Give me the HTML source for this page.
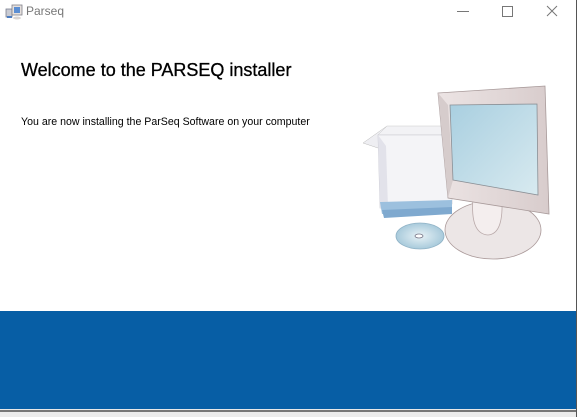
<!DOCTYPE html>
<html><head><meta charset="utf-8"><style>
html,body{margin:0;padding:0;}
body{width:577px;height:417px;position:relative;background:#fff;overflow:hidden;font-family:"Liberation Sans",sans-serif;}
.t{position:absolute;}
</style></head><body>
<div class="t" style="left:576px;top:0;width:1px;height:417px;background:#555"></div>
<svg class="t" style="left:5px;top:4px" width="18" height="16" viewBox="0 0 18 16">
<rect x="1" y="5" width="6" height="8" fill="#c9cbd3" stroke="#7a7f90" stroke-width="0.8"/>
<rect x="7" y="1" width="10" height="10" fill="#e6e0dd" stroke="#80808a" stroke-width="0.8"/>
<rect x="9" y="3" width="6" height="6" fill="#5b8ed3"/>
<rect x="2" y="12" width="5" height="2" fill="#4b7cc0"/>
<ellipse cx="12" cy="14" rx="4" ry="1.5" fill="#d9d4d2"/>
</svg>
<div class="t" style="left:26px;top:4px;font-size:12px;color:#777">Parseq</div>
<div class="t" style="left:457px;top:11px;width:12px;height:1px;background:#777"></div>
<div class="t" style="left:502px;top:6px;width:9px;height:9px;border:1px solid #777"></div>
<svg class="t" style="left:546px;top:5px" width="12" height="12"><path d="M1 1L11 11M11 1L1 11" stroke="#777" stroke-width="1"/></svg>
<div class="t" style="left:21px;top:60px;font-size:18px;color:#000;-webkit-text-stroke:0.3px #000">Welcome to the PARSEQ installer</div>
<div class="t" style="left:21px;top:116px;font-size:10.6px;color:#000">You are now installing the ParSeq Software on your computer</div>
<svg class="t" style="left:350px;top:80px" width="227" height="190" viewBox="0 0 227 190">
<defs>
<linearGradient id="sc" x1="0" y1="0" x2="1" y2="1"><stop offset="0" stop-color="#a9cfe0"/><stop offset="1" stop-color="#d8eaf0"/></linearGradient>
<linearGradient id="fr" x1="0" y1="0" x2="1" y2="0"><stop offset="0" stop-color="#ece4e4"/><stop offset="1" stop-color="#d8cccc"/></linearGradient>
<radialGradient id="cd"><stop offset="0" stop-color="#e8f2f6"/><stop offset="1" stop-color="#a8cadb"/></radialGradient>
</defs>
<polygon points="13,63 37,46 44,55 28,68" fill="#eeeef2" stroke="#bbb" stroke-width="0.5"/>
<polygon points="28,55 37,46 95,46 102,55" fill="#f2f2f5" stroke="#ccc" stroke-width="0.5"/>
<polygon points="28,55 102,55 102,124 30,128" fill="#f4f4f7" stroke="#c8c8d0" stroke-width="0.6"/>
<polygon points="28,55 36,66 38,128 30,128" fill="#e2e2ea"/>
<polygon points="30,122 102,120 102,130 32,134" fill="#9cc0de"/>
<polygon points="32,130 102,127 102,134 34,138" fill="#7fa9cf"/>
<ellipse cx="70" cy="156" rx="24" ry="13" fill="url(#cd)" stroke="#8fb2c6" stroke-width="0.8"/>
<ellipse cx="69" cy="156" rx="4" ry="2" fill="#fff" stroke="#778" stroke-width="0.8"/>
<ellipse cx="143" cy="150" rx="48" ry="29" fill="#ece6e6" stroke="#a99" stroke-width="0.8"/>
<path d="M123 118 Q120 154 138 155 Q153 154 152 122 Z" fill="#f4eeee" stroke="#b9a9a9" stroke-width="0.8"/>
<polygon points="88,13 195,6 199,134 98,118" fill="url(#fr)" stroke="#a89a9a" stroke-width="0.8"/>
<polygon points="88,13 98,25 103,100 98,118" fill="#d6cccc"/>
<polygon points="100,25 187,24 188,115 103,100" fill="url(#sc)" stroke="#8a8f95" stroke-width="0.8"/>
</svg>
<div class="t" style="left:0;top:311px;width:576px;height:98px;background:#075ea5"></div>
<div class="t" style="left:0;top:409px;width:576px;height:1px;background:#e8e8e8"></div>
<div class="t" style="left:0;top:410px;width:576px;height:2px;background:#777"></div>
<div class="t" style="left:0;top:412px;width:576px;height:5px;background:#ececec"></div>
</body></html>
